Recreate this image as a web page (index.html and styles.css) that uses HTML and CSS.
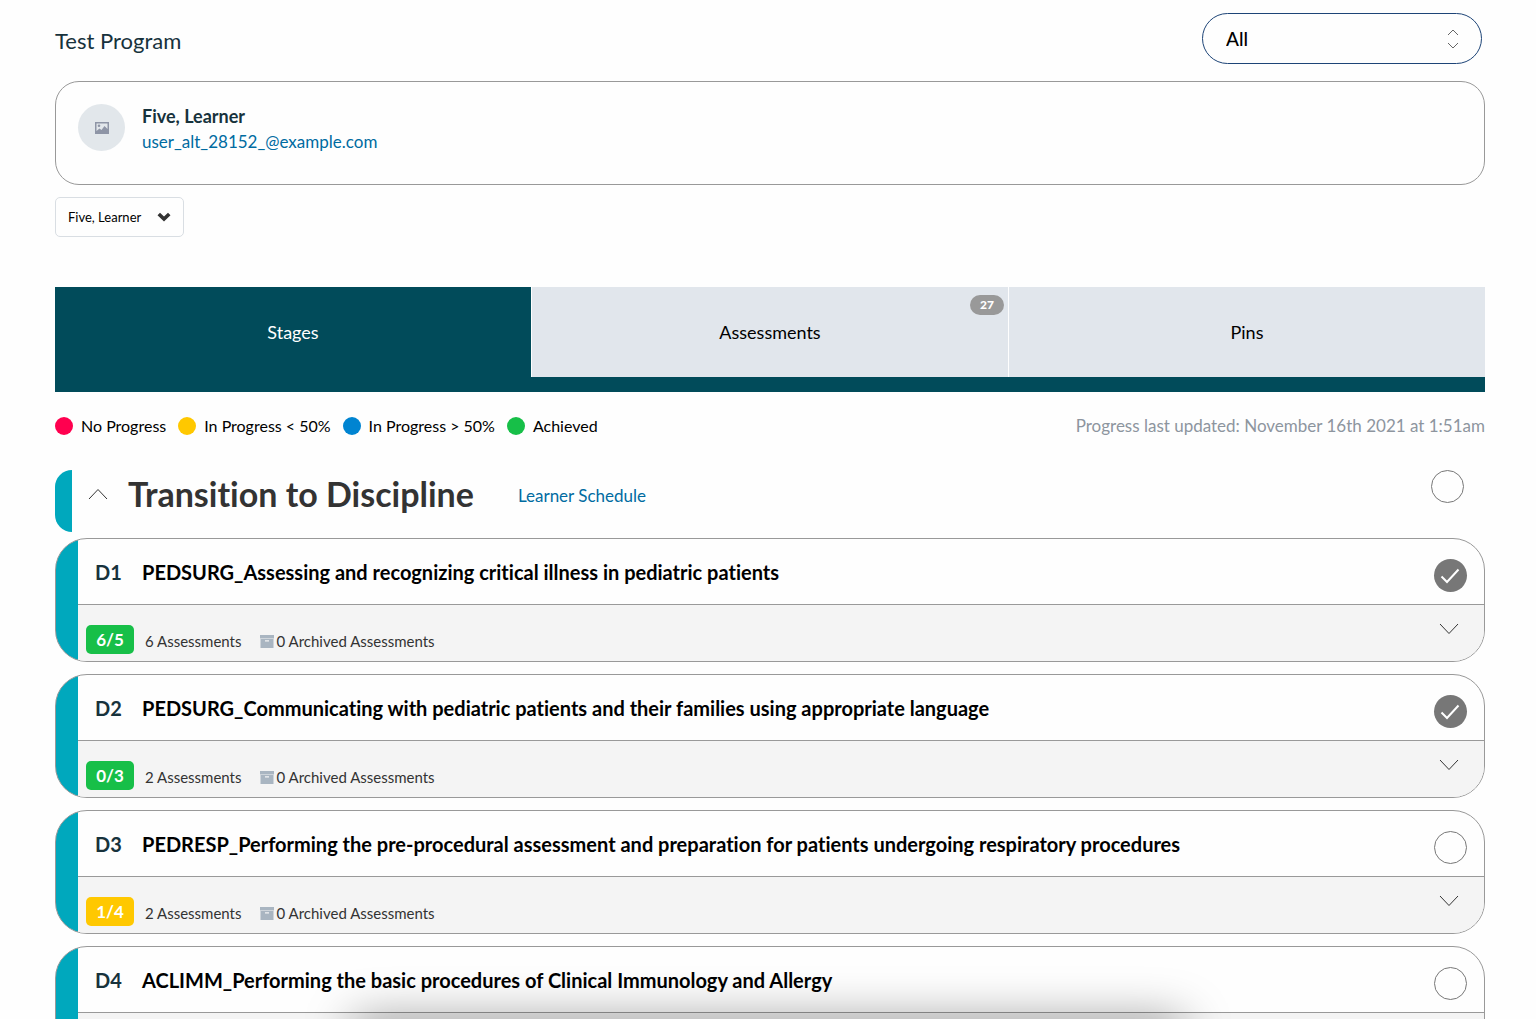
FILE: index.html
```html
<!DOCTYPE html>
<html lang="en">
<head>
    <meta charset="UTF-8">
    <meta name="viewport" content="width=device-width, initial-scale=1.0">
    <title>Test Program</title>
    <link rel="stylesheet" href="styles.css">
</head>
<body>
    <svg class="sprite" aria-hidden="true">
        <symbol id="icon-up" viewBox="0 0 20 12"><path d="M1 11 L10 1.500 L19 11"/></symbol>
        <symbol id="icon-down" viewBox="0 0 20 12"><path d="M1 1 L10 10.500 L19 1"/></symbol>
        <symbol id="icon-check" viewBox="0 0 32 32"><path d="M7.500 17.500 L13 23 L24.500 10.500"/></symbol>
        <symbol id="icon-archive" viewBox="0 0 14 13">
            <path d="M0 0h14v3.500h-14z"/>
            <path d="M0.500 4h13v9h-13zM5 5.200v1.200h4V5.200z" fill-rule="evenodd"/>
        </symbol>
    </svg>

    <main class="page">
        <header class="page-header">
            <h1 id="program">Test Program</h1>
            <div class="select-pill">
                <select id="filter" aria-labelledby="program">
                    <option>All</option>
                </select>
                <svg class="select-arrows" width="12" height="20" viewBox="0 0 12 20"><path d="M1 6 L6 1 L11 6 M1 14 L6 19 L11 14"/></svg>
            </div>
        </header>

        <section class="learner-card">
            <div class="avatar">
                <svg width="14" height="12" viewBox="0 0 14 12"><path d="M0 0h14v12H0zM1.500 1.500v7.500L4.500 6.500l2 1.500L9.500 4l3 3V1.500z" fill-rule="evenodd"/><circle cx="4" cy="3.700" r="1.300"/></svg>
            </div>
            <div class="learner-info">
                <strong>Five, Learner</strong>
                <a href="#">user_alt_28152_@example.com</a>
            </div>
        </section>

        <button type="button" class="learner-picker">
            Five, Learner
            <svg width="14" height="10" viewBox="0 0 14 10"><path d="M0.500 3.200 L3 0.700 L7 4.400 L11 0.700 L13.500 3.200 L7 9.500z"/></svg>
        </button>

        <nav class="tabs">
            <button type="button" class="tab active">Stages</button>
            <button type="button" class="tab">Assessments <span class="count">27</span></button>
            <button type="button" class="tab">Pins</button>
        </nav>

        <div class="status-row">
            <ul class="legend">
                <li><span class="dot red"></span>No Progress</li>
                <li><span class="dot yellow"></span>In Progress &lt; 50%</li>
                <li><span class="dot blue"></span>In Progress &gt; 50%</li>
                <li><span class="dot green"></span>Achieved</li>
            </ul>
            <p class="updated">Progress last updated: November 16th 2021 at 1:51am</p>
        </div>

        <section class="stage">
            <div class="stage-header">
                <button type="button" class="toggle" aria-label="Collapse stage"><svg width="20" height="12"><use href="#icon-up"/></svg></button>
                <h2>Transition to Discipline</h2>
                <a href="#">Learner Schedule</a>
                <label class="status">
                    <input type="checkbox" aria-label="Transition to Discipline complete">
                    <svg width="32" height="32"><use href="#icon-check"/></svg>
                </label>
            </div>

            <article class="epa">
                <div class="epa-title">
                    <span class="code">D1</span>
                    <h3>PEDSURG_Assessing and recognizing critical illness in pediatric patients</h3>
                    <label class="status">
                        <input type="checkbox" aria-label="D1 complete" checked>
                        <svg width="32" height="32"><use href="#icon-check"/></svg>
                    </label>
                </div>
                <div class="epa-details">
                    <span class="score green">6/5</span>
                    <span class="total">6 Assessments</span>
                    <span class="archived"><svg width="14" height="13"><use href="#icon-archive"/></svg>0 Archived Assessments</span>
                    <button type="button" class="toggle" aria-label="Expand D1"><svg width="20" height="12"><use href="#icon-down"/></svg></button>
                </div>
            </article>

            <article class="epa">
                <div class="epa-title">
                    <span class="code">D2</span>
                    <h3>PEDSURG_Communicating with pediatric patients and their families using appropriate language</h3>
                    <label class="status">
                        <input type="checkbox" aria-label="D2 complete" checked>
                        <svg width="32" height="32"><use href="#icon-check"/></svg>
                    </label>
                </div>
                <div class="epa-details">
                    <span class="score green">0/3</span>
                    <span class="total">2 Assessments</span>
                    <span class="archived"><svg width="14" height="13"><use href="#icon-archive"/></svg>0 Archived Assessments</span>
                    <button type="button" class="toggle" aria-label="Expand D2"><svg width="20" height="12"><use href="#icon-down"/></svg></button>
                </div>
            </article>

            <article class="epa">
                <div class="epa-title">
                    <span class="code">D3</span>
                    <h3>PEDRESP_Performing the pre-procedural assessment and preparation for patients undergoing respiratory procedures</h3>
                    <label class="status">
                        <input type="checkbox" aria-label="D3 complete">
                        <svg width="32" height="32"><use href="#icon-check"/></svg>
                    </label>
                </div>
                <div class="epa-details">
                    <span class="score yellow">1/4</span>
                    <span class="total">2 Assessments</span>
                    <span class="archived"><svg width="14" height="13"><use href="#icon-archive"/></svg>0 Archived Assessments</span>
                    <button type="button" class="toggle" aria-label="Expand D3"><svg width="20" height="12"><use href="#icon-down"/></svg></button>
                </div>
            </article>

            <article class="epa">
                <div class="epa-title">
                    <span class="code">D4</span>
                    <h3>ACLIMM_Performing the basic procedures of Clinical Immunology and Allergy</h3>
                    <label class="status">
                        <input type="checkbox" aria-label="D4 complete">
                        <svg width="32" height="32"><use href="#icon-check"/></svg>
                    </label>
                </div>
                <div class="epa-details"></div>
            </article>
        </section>
    </main>

    <div class="bottom-shade"></div>
</body>
</html>
```

FILE: styles.css
```css
* {
    margin: 0;
    padding: 0;
    box-sizing: border-box;
}

html {
    scrollbar-width: none;
}

body {
    font-family: Lato, sans-serif;
    font-size: 16px;
    font-variant-ligatures: none;
    line-height: 24px;
    color: #000;
    background: #fefefe;
}

button, select {
    font: inherit;
    font-variant-ligatures: none;
    color: inherit;
    background: none;
    border: none;
    cursor: pointer;
}

a {
    color: #006ba1;
    text-decoration: none;
}

.sprite {
    display: none;
}

.page {
    padding: 13px 51px 0 55px;
}

/* Header */
.page-header {
    display: flex;
    justify-content: space-between;
    align-items: center;
    padding-right: 3px;
    margin-bottom: 17px;
}

.page-header h1 {
    font-size: 22px;
    font-weight: 400;
    line-height: 32px;
    padding-top: 4px;
    color: #17323c;
}

.select-pill {
    display: grid;
    width: 280px;
    height: 51px;
    align-items: center;
}

.select-pill select,
.select-arrows {
    grid-area: 1 / 1;
}

.select-pill select {
    appearance: none;
    width: 100%;
    height: 100%;
    padding: 0 23px;
    border: 1px solid #1d4477;
    border-radius: 26px;
    font-size: 19px;
    font-weight: 500;
}

.select-arrows {
    justify-self: end;
    margin-right: 23px;
    fill: none;
    stroke: #666;
    pointer-events: none;
}

/* Learner */
.learner-card {
    display: flex;
    gap: 17px;
    height: 104px;
    padding: 22px;
    border: 1px solid #999;
    border-radius: 24px;
}

.avatar {
    display: flex;
    align-items: center;
    justify-content: center;
    width: 47px;
    height: 47px;
    border-radius: 50%;
    background: #e2e7eb;
    fill: #8e95a6;
}

.learner-info {
    font-size: 17px;
    line-height: 25px;
}

.learner-info strong {
    display: block;
    font-size: 18px;
    color: #17323c;
}

.learner-info a {
    display: block;
}

.learner-picker {
    display: flex;
    align-items: center;
    gap: 16px;
    height: 40px;
    margin-top: 12px;
    padding: 0 12px;
    border: 1px solid #d9dee3;
    border-radius: 5px;
    font-size: 13px;
    fill: #333;
}

/* Tabs */
.tabs {
    display: flex;
    gap: 1px;
    margin-top: 50px;
    border-bottom: 15px solid #014b5a;
}

.tab {
    flex: 1;
    position: relative;
    height: 90px;
    background: #e1e6ec;
    font-size: 18px;
}

.tab.active {
    background: #014b5a;
    color: #fff;
}

.count {
    position: absolute;
    top: 8px;
    right: 4px;
    width: 34px;
    border-radius: 10px;
    background: #999;
    color: #fff;
    font-size: 12px;
    font-weight: 900;
    line-height: 20px;
}

/* Legend */
.status-row {
    display: flex;
    justify-content: space-between;
    margin-top: 22px;
}

.legend {
    display: flex;
    gap: 12px;
    list-style: none;
}

.legend li {
    display: flex;
    align-items: center;
    gap: 8px;
}

.dot {
    width: 18px;
    height: 18px;
    border-radius: 50%;
}

.updated {
    font-size: 17px;
    color: #8d959e;
}

.red {
    background: #ff004f;
}

.yellow {
    background: #ffc800;
}

.blue {
    background: #0084d1;
}

.green {
    background: #17bf48;
}

/* Stage */
.stage {
    margin-top: 32px;
}

.stage-header {
    display: flex;
    align-items: center;
    height: 62px;
    margin-bottom: 6px;
    padding-right: 21px;
    font-size: 17px;
}

.stage-header::before {
    content: "";
    width: 17px;
    height: 100%;
    border-radius: 17px 0 0 17px;
    background: #00a8bd;
}

.stage-header .toggle {
    margin: 0 20px 14px 16px;
}

.stage-header h2 {
    margin-right: 44px;
    padding-bottom: 14px;
    font-size: 34px;
    line-height: 40px;
    color: #333;
}

.stage-header a {
    padding-bottom: 10px;
}

.stage-header .status {
    margin-bottom: 30px;
}

.toggle {
    display: flex;
    fill: none;
    stroke: #333;
}

.status {
    display: grid;
    margin-left: auto;
    cursor: pointer;
}

.status input,
.status svg {
    grid-area: 1 / 1;
}

.status input {
    appearance: none;
    width: 33px;
    height: 33px;
    border: 1px solid #777;
    border-radius: 50%;
}

.status input:checked {
    border: none;
    background: #777;
}

.status svg {
    display: none;
    fill: none;
    stroke: #fff;
    stroke-width: 2;
}

.status input:checked + svg {
    display: block;
}

/* EPA cards */
.epa {
    height: 124px;
    margin-bottom: 12px;
    border: 1px solid #999;
    border-radius: 32px;
    background: linear-gradient(to right, #00a8bd 22px, #fefefe 22px);
    overflow: hidden;
}

.epa-title {
    display: flex;
    align-items: center;
    height: 65px;
    margin-left: 22px;
    padding: 0 17px;
}

.epa-title .status {
    margin-top: 7px;
}

.code {
    width: 47px;
    font-size: 20px;
    font-weight: 700;
    color: #17323c;
}

.epa h3 {
    font-size: 20px;
}

.epa-details {
    display: flex;
    align-items: center;
    height: 57px;
    margin-left: 22px;
    padding: 12px 25px 0 8px;
    border-top: 1px solid #999;
    background: #f4f4f4;
    font-size: 15px;
    color: #333;
}

.score {
    width: 48px;
    margin-right: 11px;
    border-radius: 5px;
    color: #fff;
    font-size: 17px;
    font-weight: 700;
    line-height: 29px;
    text-align: center;
}

.total {
    margin-right: 18px;
    padding-top: 4px;
}

.archived {
    display: flex;
    align-items: center;
    gap: 3px;
    padding-top: 4px;
    fill: #a9b5c1;
}

.epa-details .toggle {
    margin: 0 0 20px auto;
}

/* Shade under the list, cast from below the window edge */
.bottom-shade {
    position: fixed;
    left: 23%;
    right: 23%;
    top: 100%;
    height: 40px;
    box-shadow: 0 0 48px 0 rgba(0, 0, 0, 0.4);
}
```
